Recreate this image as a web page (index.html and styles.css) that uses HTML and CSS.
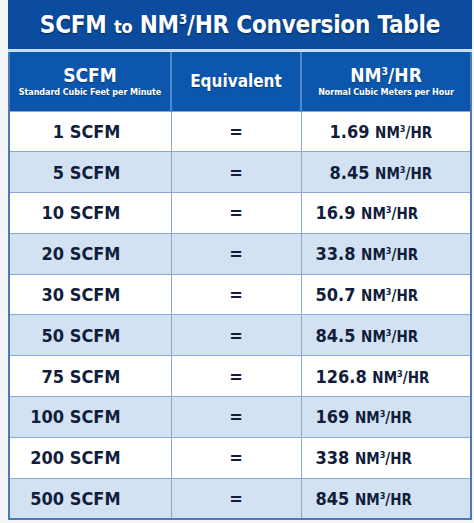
FILE: index.html
```html
<!DOCTYPE html>
<html lang="en">
<head>
    <meta charset="UTF-8">
    <meta name="viewport" content="width=device-width, initial-scale=1.0">
    <title>SCFM to NM3/HR Conversion Table</title>
    <link rel="stylesheet" href="styles.css">
</head>
<body>
    <div class="chart">
        <!-- Title -->
        <h1 class="chart-title">SCFM <span class="small-word">to</span> NM<sup>3</sup>/HR Conversion Table</h1>

        <table class="conv-table">
            <thead>
                <tr>
                    <th class="col-scfm">
                        <span class="head-main">SCFM</span>
                        <span class="head-sub">Standard Cubic Feet per Minute</span>
                    </th>
                    <th class="col-eq">
                        <span class="head-eq">Equivalent</span>
                    </th>
                    <th class="col-nm">
                        <span class="head-main">NM<sup>3</sup>/HR</span>
                        <span class="head-sub">Normal Cubic Meters per Hour</span>
                    </th>
                </tr>
            </thead>
            <tbody>
                <tr>
                    <td class="cell-scfm">1 SCFM</td>
                    <td class="cell-eq">=</td>
                    <td class="cell-nm indent">1.69 <span class="unit">NM<sup>3</sup>/HR</span></td>
                </tr>
                <tr>
                    <td class="cell-scfm">5 SCFM</td>
                    <td class="cell-eq">=</td>
                    <td class="cell-nm indent">8.45 <span class="unit">NM<sup>3</sup>/HR</span></td>
                </tr>
                <tr>
                    <td class="cell-scfm">10 SCFM</td>
                    <td class="cell-eq">=</td>
                    <td class="cell-nm">16.9 <span class="unit">NM<sup>3</sup>/HR</span></td>
                </tr>
                <tr>
                    <td class="cell-scfm">20 SCFM</td>
                    <td class="cell-eq">=</td>
                    <td class="cell-nm">33.8 <span class="unit">NM<sup>3</sup>/HR</span></td>
                </tr>
                <tr>
                    <td class="cell-scfm">30 SCFM</td>
                    <td class="cell-eq">=</td>
                    <td class="cell-nm">50.7 <span class="unit">NM<sup>3</sup>/HR</span></td>
                </tr>
                <tr>
                    <td class="cell-scfm">50 SCFM</td>
                    <td class="cell-eq">=</td>
                    <td class="cell-nm">84.5 <span class="unit">NM<sup>3</sup>/HR</span></td>
                </tr>
                <tr>
                    <td class="cell-scfm">75 SCFM</td>
                    <td class="cell-eq">=</td>
                    <td class="cell-nm">126.8 <span class="unit">NM<sup>3</sup>/HR</span></td>
                </tr>
                <tr>
                    <td class="cell-scfm">100 SCFM</td>
                    <td class="cell-eq">=</td>
                    <td class="cell-nm">169 <span class="unit">NM<sup>3</sup>/HR</span></td>
                </tr>
                <tr>
                    <td class="cell-scfm">200 SCFM</td>
                    <td class="cell-eq">=</td>
                    <td class="cell-nm">338 <span class="unit">NM<sup>3</sup>/HR</span></td>
                </tr>
                <tr>
                    <td class="cell-scfm">500 SCFM</td>
                    <td class="cell-eq">=</td>
                    <td class="cell-nm">845 <span class="unit">NM<sup>3</sup>/HR</span></td>
                </tr>
            </tbody>
        </table>
    </div>
</body>
</html>
```

FILE: styles.css
```css
* {
    margin: 0;
    padding: 0;
    box-sizing: border-box;
}

body {
    font-family: "DejaVu Sans Condensed", "Liberation Sans Narrow", "Open Sans", sans-serif;
    font-stretch: condensed;
    background: #f4f5f7;
    color: #111d3a;
}

.chart {
    width: 464px;
    margin-left: 8px;
    background: white;
}

/* Title band */
.chart-title {
    height: 52px;
    background: #0b4c9f;
    color: white;
    font-size: 24px;
    font-weight: 700;
    text-align: center;
    line-height: 51px;
    letter-spacing: -0.2px;
    text-shadow: 0 1px 2px rgba(0,0,0,0.45);
    border-bottom: 3px solid #c9dcf2;
}

.chart-title .small-word {
    font-size: 18px;
}

.chart-title sup,
.head-main sup {
    font-size: 0.55em;
    vertical-align: 0.7em;
    line-height: 0;
}

/* Table */
.conv-table {
    width: 100%;
    border-collapse: collapse;
    border: 2px solid #4f78b6;
    border-top: none;
}

.conv-table th {
    height: 59px;
    background: #0d56ad;
    color: white;
    font-weight: 700;
    text-align: center;
    vertical-align: middle;
    border-left: 2px solid #4f86cc;
    text-shadow: 0 1px 1px rgba(0,0,0,0.35);
}

.conv-table th:first-child {
    border-left: none;
}

.col-scfm { width: 162px; }
.col-eq { width: 130px; }

.head-main {
    display: block;
    font-size: 19px;
    line-height: 22px;
}

.head-sub {
    display: block;
    font-size: 9px;
    line-height: 13px;
    letter-spacing: -0.1px;
}

.head-eq {
    font-size: 17px;
}

.conv-table td {
    height: 40.8px;
    font-weight: 700;
    font-size: 18px;
    border-top: 1px solid #8aa8d2;
    border-left: 1px solid #8aa8d2;
    vertical-align: middle;
}

.conv-table td:first-child {
    border-left: none;
}

.conv-table tbody tr:nth-child(even) td {
    background: #d2e2f3;
}

.cell-scfm {
    text-align: right;
    padding-right: 50px;
}

.cell-eq {
    text-align: center;
    font-size: 18px;
}

.cell-nm {
    padding-left: 14px;
}

.cell-nm.indent {
    padding-left: 28px;
}

.unit {
    font-size: 15px;
}

.unit sup {
    font-size: 9px;
    vertical-align: 6px;
    line-height: 0;
}
```
